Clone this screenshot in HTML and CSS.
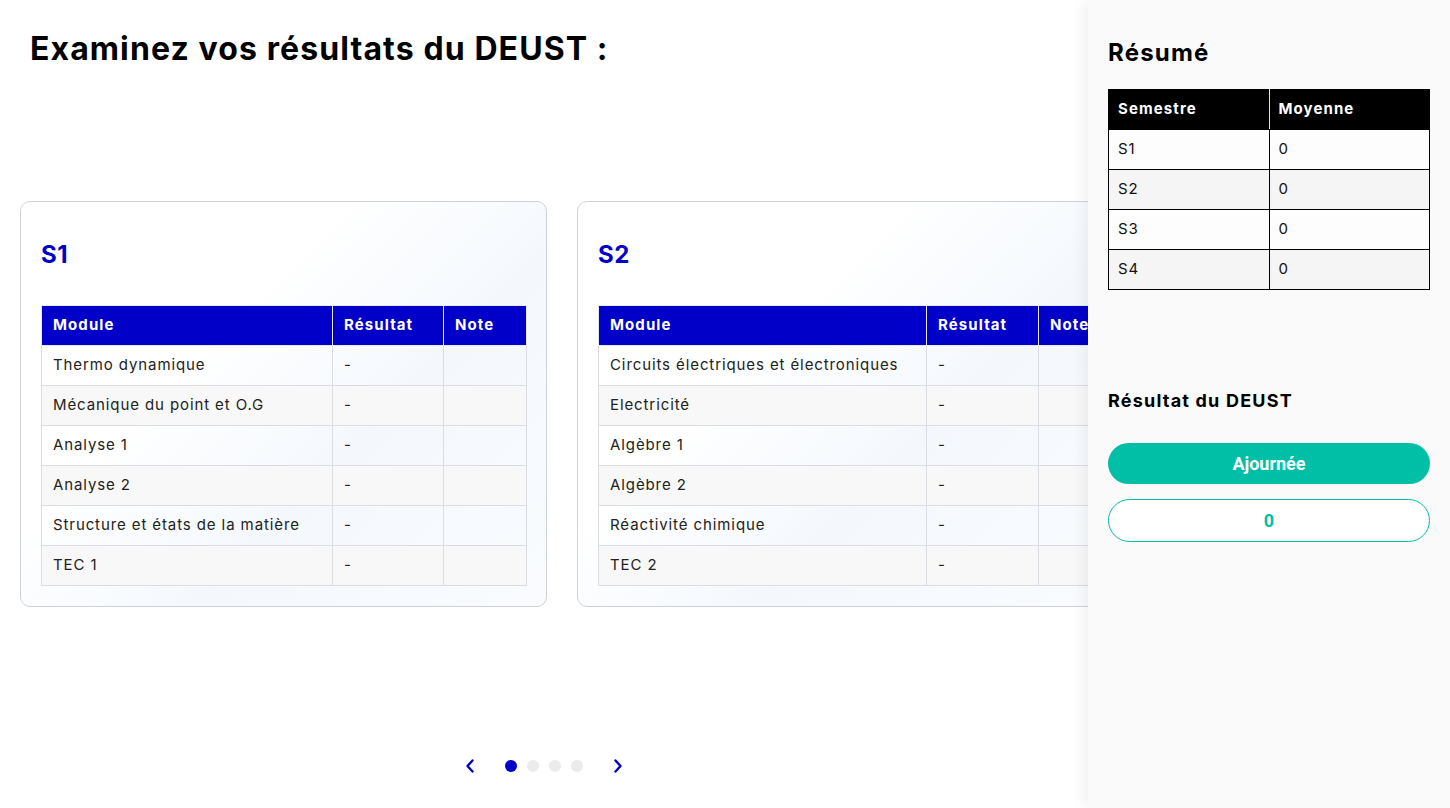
FILE: index.html
```html
<!DOCTYPE html>
<html lang="fr">
<head>
<meta charset="utf-8">
<title>Résultats du DEUST</title>
<link rel="stylesheet" href="styles.css">
</head>
<body>
<div class="page">
  <main class="main">
    <h1 class="title">Examinez vos résultats du DEUST :</h1>
    <div class="carousel">
      <div class="track">
        <section class="card">
          <h2 class="card-title">S1</h2>
          <table class="grid t1">
            <colgroup><col class="c-mod"><col class="c-res"><col class="c-note"></colgroup>
            <thead><tr><th>Module</th><th>Résultat</th><th>Note</th></tr></thead>
            <tbody>
              <tr><td>Thermo dynamique</td><td>-</td><td></td></tr>
              <tr><td>Mécanique du point et O.G</td><td>-</td><td></td></tr>
              <tr><td>Analyse 1</td><td>-</td><td></td></tr>
              <tr><td>Analyse 2</td><td>-</td><td></td></tr>
              <tr><td>Structure et états de la matière</td><td>-</td><td></td></tr>
              <tr><td>TEC 1</td><td>-</td><td></td></tr>
            </tbody>
          </table>
        </section>
        <section class="card">
          <h2 class="card-title">S2</h2>
          <table class="grid t2">
            <colgroup><col class="c-mod"><col class="c-res"><col class="c-note"></colgroup>
            <thead><tr><th>Module</th><th>Résultat</th><th>Note</th></tr></thead>
            <tbody>
              <tr><td>Circuits électriques et électroniques</td><td>-</td><td></td></tr>
              <tr><td>Electricité</td><td>-</td><td></td></tr>
              <tr><td>Algèbre 1</td><td>-</td><td></td></tr>
              <tr><td>Algèbre 2</td><td>-</td><td></td></tr>
              <tr><td>Réactivité chimique</td><td>-</td><td></td></tr>
              <tr><td>TEC 2</td><td>-</td><td></td></tr>
            </tbody>
          </table>
        </section>
      </div>
    </div>
    <nav class="pager">
      <button class="arrow" aria-label="Précédent">
        <svg width="10" height="14" viewBox="0 0 10 14"><path d="M7.5 1.5 L2.5 7 L7.5 12.5" fill="none" stroke="#0000c8" stroke-width="2.4" stroke-linecap="round" stroke-linejoin="round"/></svg>
      </button>
      <div class="dots">
        <span class="dot active"></span>
        <span class="dot"></span>
        <span class="dot"></span>
        <span class="dot"></span>
      </div>
      <button class="arrow" aria-label="Suivant">
        <svg width="10" height="14" viewBox="0 0 10 14"><path d="M2.5 1.5 L7.5 7 L2.5 12.5" fill="none" stroke="#0000c8" stroke-width="2.4" stroke-linecap="round" stroke-linejoin="round"/></svg>
      </button>
    </nav>
  </main>
  <aside class="side">
    <h2 class="side-title">Résumé</h2>
    <table class="summary">
      <thead><tr><th>Semestre</th><th>Moyenne</th></tr></thead>
      <tbody>
        <tr><td>S1</td><td>0</td></tr>
        <tr><td>S2</td><td>0</td></tr>
        <tr><td>S3</td><td>0</td></tr>
        <tr><td>S4</td><td>0</td></tr>
      </tbody>
    </table>
    <h3 class="result-title">Résultat du DEUST</h3>
    <div class="pill filled">Ajournée</div>
    <div class="pill outline">0</div>
  </aside>
</div>
</body>
</html>
```
FILE: styles.css
```css
* { box-sizing: border-box; }
html, body { margin: 0; padding: 0; }
body {
  font-family: Inter, "Noto Sans", "DejaVu Sans", sans-serif;
  color: #1a1a1a;
  background: #ffffff;
  width: 1450px;
  height: 808px;
  overflow: hidden;
}
.page {
  display: flex;
  height: 808px;
}
.main {
  width: 1088px;
  flex: none;
  overflow: hidden;
  padding: 29px 0 0 20px;
}
.title {
  margin: 0 0 133px 10px;
  font-size: 32px;
  line-height: 39px;
  font-weight: 700;
  letter-spacing: 1.1px;
  color: #000;
}
.carousel {
  overflow: hidden;
  width: 1100px;
}
.track {
  display: flex;
  gap: 30px;
  width: max-content;
}
.card {
  width: 527px;
  height: 406px;
  border: 1px solid #cfd2d8;
  border-radius: 10px;
  padding: 20px;
  background: linear-gradient(135deg, #ffffff 0%, #ffffff 35%, #f4f8fd 62%, #f9fbfe 100%);
}
.card-title {
  margin: 18px 0 36px;
  font-size: 24px;
  line-height: 29px;
  font-weight: 700;
  letter-spacing: 0.5px;
  color: #0000c8;
}
.grid {
  border-collapse: collapse;
  font-size: 15px;
  letter-spacing: 0.9px;
  table-layout: fixed;
}
.grid th, .grid td {
  height: 40px;
  padding: 0 11px 2px;
  text-align: left;
  border: 1px solid #dcdde2;
  white-space: nowrap;
  overflow: hidden;
}
.grid th {
  background: #0000c8;
  color: #fff;
  font-weight: 700;
  letter-spacing: 1.1px;
  border-color: #e6e8f0;
}
.grid td { color: #222; }
.grid tbody tr:nth-child(even) td { background: #f8f8f8; }
.t1 { width: 485px; }
.t1 .c-mod { width: 291px; }
.t1 .c-res { width: 111px; }
.t1 .c-note { width: 83px; }
.t2 { width: 500px; }
.t2 .c-mod { width: 328px; }
.t2 .c-res { width: 112px; }
.t2 .c-note { width: 60px; }

.pager {
  margin-top: 152px;
  display: flex;
  justify-content: center;
  align-items: center;
  gap: 30px;
  padding-right: 20px;
}
.arrow {
  border: 0;
  background: none;
  padding: 0;
  width: 10px;
  height: 14px;
  display: flex;
}
.dots {
  display: flex;
  gap: 10px;
}
.dot {
  width: 12px;
  height: 12px;
  border-radius: 50%;
  background: #ebebeb;
}
.dot.active { background: #0000c8; }

.side {
  width: 362px;
  flex: none;
  background: #fafafa;
  box-shadow: -4px 0 14px rgba(0, 0, 0, 0.06);
  padding: 37px 20px 20px;
  position: relative;
  z-index: 1;
}
.side-title {
  margin: 0 0 20px;
  font-size: 24px;
  line-height: 32px;
  font-weight: 700;
  letter-spacing: 1.2px;
  color: #000;
}
.summary {
  width: 322px;
  border-collapse: collapse;
  font-size: 15px;
  letter-spacing: 0.9px;
  table-layout: fixed;
}
.summary th, .summary td {
  height: 40px;
  padding: 0 9px 2px;
  text-align: left;
  border: 1px solid #000;
}
.summary th {
  background: #000;
  color: #fff;
  font-weight: 700;
  letter-spacing: 1.1px;
  border-color: #000 #e0e0e0;
}
.summary th:first-child { border-left-color: #000; }
.summary th:last-child { border-right-color: #000; }
.summary td { color: #111; background: #fdfdfd; }
.summary tbody tr:nth-child(even) td { background: #f5f5f5; }

.result-title {
  margin: 100px 0 31px;
  font-size: 18px;
  line-height: 22px;
  font-weight: 700;
  letter-spacing: 1.2px;
  color: #000;
}
.pill {
  width: 322px;
  border-radius: 22px;
  display: flex;
  align-items: center;
  justify-content: center;
  font-family: Roboto, "Liberation Sans", sans-serif;
  font-weight: 700;
  font-size: 18px;
}
.pill.filled {
  height: 41px;
  background: #00bfa6;
  color: #fff;
}
.pill.outline {
  margin-top: 15px;
  height: 43px;
  border: 1px solid #00bfa6;
  color: #00bfa6;
  background: #fff;
}
```
